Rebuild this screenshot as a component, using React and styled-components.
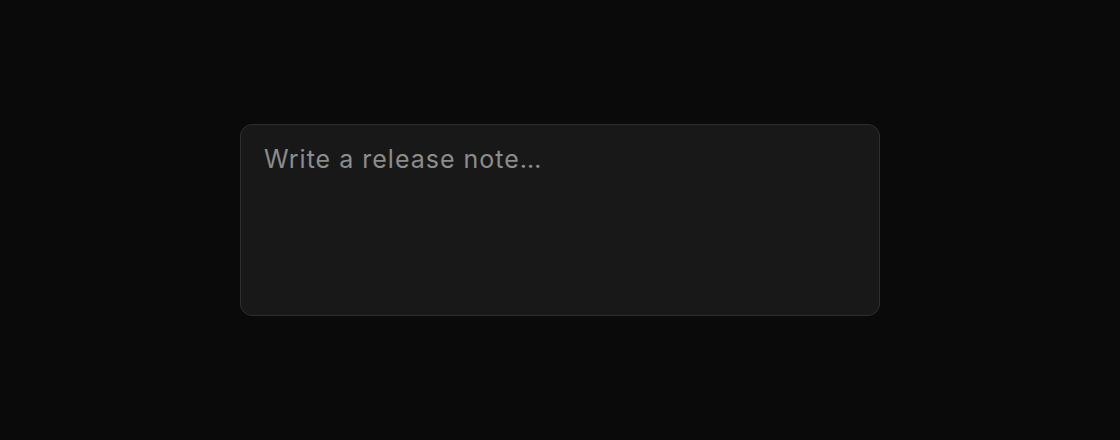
import React from "react";
import styled, { createGlobalStyle } from "styled-components";

const GlobalStyle = createGlobalStyle`
  html, body {
    margin: 0;
    padding: 0;
    background: #0a0a0a;
  }
`;

const Page = styled.div`
  width: 1120px;
  height: 440px;
  display: flex;
  align-items: center;
  justify-content: center;
  background: #0a0a0a;
`;

const NoteInput = styled.textarea`
  box-sizing: border-box;
  width: 640px;
  height: 192px;
  padding: 17px 23px;
  background: #181818;
  border: 1px solid #2e2e2e;
  border-radius: 12px;
  color: #e5e5e5;
  font-family: Inter, "Liberation Sans", sans-serif;
  font-size: 25px;
  letter-spacing: 1px;
  line-height: 34px;
  resize: none;
  outline: none;

  &::placeholder {
    color: #8c8c8c;
  }
`;

const App = () => {
  return (
    <>
      <GlobalStyle />
      <Page>
        <NoteInput placeholder="Write a release note…" />
      </Page>
    </>
  );
};

export default App;
